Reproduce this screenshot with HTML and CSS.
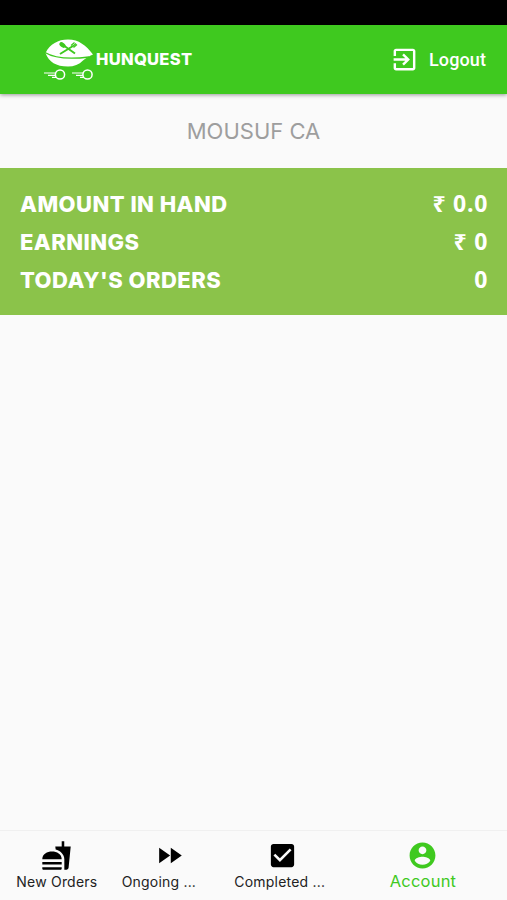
FILE: index.html
```html
<!DOCTYPE html>
<html lang="en">
<head>
  <meta charset="UTF-8">
  <title>Hunquest</title>
  <link rel="stylesheet" href="styles.css">
</head>
<body>
<div class="app">
  <div class="statusbar"></div>
  <header class="header">
    <div class="logo">
      <svg class="logo-mark" viewBox="0 0 50 44">
        <path fill="#fff" d="M1.500 15C6 6 14 1.500 24 1.500c11 0 18 6 25 15-4 1.500-7 3.500-10 6-4 4-9 6-15 6C12 28.500 5 24 1.500 15z"/>
        <path fill="none" stroke="#3fc91f" stroke-width="1.300" d="M1 14.500c9 5.500 24 7 44 4.500"/>
        <path fill="none" stroke="#3fc91f" stroke-width="2" d="M19 7l12 8.500M29 8l-13 8"/>
        <ellipse cx="18.500" cy="7" rx="3.500" ry="2.200" transform="rotate(36 18.500 7)" fill="#3fc91f"/>
        <path stroke="#3fc91f" stroke-width="1.200" d="M27 7.500l3.500-3M28.500 8.500l3.500-3M29.500 9.500l3.500-3"/>
        <g fill="none" stroke="#fff" stroke-width="1.500">
          <circle cx="16" cy="36.500" r="4.600"/>
          <circle cx="43.500" cy="36.500" r="4.600"/>
          <path stroke-width="1.200" d="M0 35h11M4 37.300h7M8 39.300h4M28 35h11M32 37.300h7M36 39.300h4"/>
        </g>
      </svg>
      <span class="logo-text">HUNQUEST</span>
    </div>
    <a class="logout" href="#">
      <svg class="logout-icon" viewBox="0 0 24 24" fill="#fff"><path d="M10.090 15.590L11.500 17l5-5-5-5-1.410 1.410L12.670 11H3v2h9.670l-2.580 2.590zM19 3H5c-1.110 0-2 .9-2 2v4h2V5h14v14H5v-4H3v4c0 1.100.89 2 2 2h14c1.100 0 2-.9 2-2V5c0-1.100-.9-2-2-2z"/></svg>
      <span>Logout</span>
    </a>
  </header>

  <h1 class="name">MOUSUF CA</h1>

  <div class="summary">
    <div class="row"><span>AMOUNT IN HAND</span><span class="value">₹ 0.0</span></div>
    <div class="row"><span>EARNINGS</span><span class="value">₹ 0</span></div>
    <div class="row"><span>TODAY'S ORDERS</span><span class="value">0</span></div>
  </div>

  <nav class="tabs">
    <a class="tab" href="#">
      <svg viewBox="0 0 24 24"><path d="M18.060 22.990h1.660c.84 0 1.530-.64 1.630-1.460L23 5.050h-5V1h-1.970v4.050h-4.970l.3 2.340c1.710.47 3.310 1.320 4.270 2.260 1.440 1.420 2.430 2.890 2.430 5.290v8.050zM1 21.990V21h15.030v.99c0 .55-.45 1-1.010 1H2.010c-.56 0-1.010-.45-1.010-1zm15.030-7c0-8-15.030-8-15.030 0h15.030zM1.020 17h15v2h-15z"/></svg>
      <span class="label">New Orders</span>
    </a>
    <a class="tab" href="#">
      <svg viewBox="0 0 24 24"><path d="M4 18l8.500-6L4 6v12zm9-12v12l8.500-6L13 6z"/></svg>
      <span class="label">Ongoing ...</span>
    </a>
    <a class="tab" href="#">
      <svg viewBox="0 0 24 24"><path d="M19 3H5c-1.110 0-2 .9-2 2v14c0 1.100.89 2 2 2h14c1.110 0 2-.9 2-2V5c0-1.100-.89-2-2-2zm-9 14l-5-5 1.410-1.410L10 14.170l7.590-7.590L19 8l-9 9z"/></svg>
      <span class="label">Completed ...</span>
    </a>
    <a class="tab current" href="#">
      <svg viewBox="0 0 24 24"><path d="M12 2C6.480 2 2 6.480 2 12s4.480 10 10 10 10-4.480 10-10S17.520 2 12 2zm0 3c1.660 0 3 1.340 3 3s-1.340 3-3 3-3-1.340-3-3 1.340-3 3-3zm0 14.200c-2.500 0-4.710-1.280-6-3.220.03-1.990 4-3.080 6-3.080 1.990 0 5.970 1.090 6 3.080-1.290 1.940-3.500 3.220-6 3.220z"/></svg>
      <span class="label">Account</span>
    </a>
  </nav>
</div>
</body>
</html>
```

FILE: styles.css
```css
* {
  margin: 0;
  padding: 0;
  box-sizing: border-box;
}

a {
  color: inherit;
  text-decoration: none;
}

svg {
  display: block;
}

.app {
  display: flex;
  flex-direction: column;
  height: 900px;
  background-color: #fafafa;
  font-family: Inter, "Liberation Sans", sans-serif;
  overflow: hidden;
}

.statusbar {
  height: 25px;
  background-color: #000;
}

.header {
  display: flex;
  justify-content: space-between;
  height: 69px;
  padding: 0 21px 0 44px;
  background-color: #3fc91f;
  box-shadow: 0 1px 4px rgba(0, 0, 0, .4);
  color: #fff;
}

.logo {
  display: flex;
  padding-top: 13px;
}

.logo-mark {
  width: 50px;
  height: 44px;
}

.logo-text {
  padding: 11px 0 0 2px;
  font-size: 16.5px;
  line-height: 20px;
  font-weight: 800;
  letter-spacing: .3px;
}

.logout {
  display: flex;
  align-items: center;
  gap: 10px;
  font-family: Roboto, sans-serif;
  font-size: 18px;
  font-weight: 500;
  letter-spacing: .1px;
}

.logout-icon {
  width: 29px;
  height: 29px;
}

.name {
  height: 74px;
  color: #9e9e9e;
  font-size: 22px;
  font-weight: 400;
  line-height: 75px;
  text-align: center;
}

.summary {
  height: 147px;
  padding: 17px 19px 0 20px;
  background-color: #8bc34a;
}

.row {
  display: flex;
  justify-content: space-between;
  height: 38px;
  color: #fff;
  font-size: 22px;
  font-weight: 800;
  line-height: 38px;
  letter-spacing: .45px;
}

.value {
  font-family: "Open Sans", "Noto Sans", sans-serif;
  font-size: 23px;
  font-weight: 700;
  line-height: 36px;
  letter-spacing: .7px;
}

.tabs {
  display: grid;
  grid-template-columns: 1fr 1fr 1fr 1.5fr;
  height: 70px;
  margin-top: auto;
  border-top: 1px solid #f0f0f0;
}

.tab {
  display: flex;
  flex-direction: column;
  padding: 9px 8px 0 9px;
  color: #222;
}

.tab svg {
  width: 31px;
  height: 31px;
  margin: 0 auto;
  fill: #000;
}

.label {
  font-size: 14px;
  line-height: 22px;
  letter-spacing: .2px;
  white-space: nowrap;
}

.tab:first-child .label {
  text-align: center;
}

.current {
  color: #3fc91f;
}

.current svg {
  fill: #3fc91f;
}

.current .label {
  font-size: 16.5px;
  line-height: 20px;
  text-align: center;
}
```
